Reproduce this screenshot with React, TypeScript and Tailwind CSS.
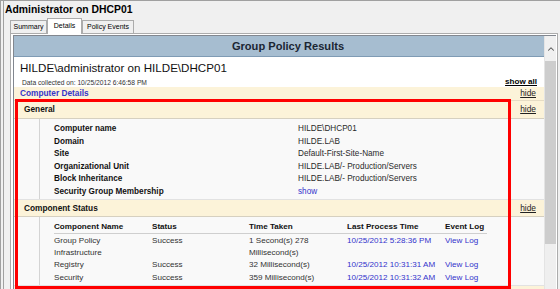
import { ChevronUp } from "lucide-react";

const general = [
	{ label: "Computer name", value: "HILDE\\DHCP01" },
	{ label: "Domain", value: "HILDE.LAB" },
	{ label: "Site", value: "Default-First-Site-Name" },
	{ label: "Organizational Unit", value: "HILDE.LAB/- Production/Servers" },
	{ label: "Block Inheritance", value: "HILDE.LAB/- Production/Servers" },
	{ label: "Security Group Membership", value: "show", link: true },
];

const components = [
	["Group Policy", "Success", "1 Second(s) 278", "10/25/2012 5:28:36 PM", "View Log"],
	["Infrastructure", "", "Millisecond(s)", "", ""],
	["Registry", "Success", "32 Millisecond(s)", "10/25/2012 10:31:31 AM", "View Log"],
	["Security", "Success", "359 Millisecond(s)", "10/25/2012 10:31:32 AM", "View Log"],
];

function SectionHeader({ title, className = "" }: { title: string; className?: string }) {
	return (
		<div
			className={`flex h-[18px] items-center justify-between border-b border-[#d6d0c0] bg-[#fcf3d9] pl-[10px] pr-[8px] ${className}`}
		>
			<span className="text-[8.3px] font-bold text-[#111]">{title}</span>
			<span className="text-[8.4px] text-[#222] underline">hide</span>
		</div>
	);
}

function App() {
	return (
		<div className="relative h-[289px] w-[560px] overflow-hidden border-l border-t border-[#a0a0a0] bg-[#f0f0f0] font-['Liberation_Sans',Arial,sans-serif] text-black">
			<div className="ml-[2px] flex h-full flex-col border-l border-[#a0a0a0]">
				<div className="h-[18px] pl-px text-[10.4px] font-bold leading-[18px]">
					Administrator on DHCP01
				</div>

				{/* tabs */}
				<div className="relative z-10 ml-[6px] flex h-[14px] items-end text-[7px] leading-[12px]">
					<div className="h-[13px] w-[37px] border border-b-0 border-[#acacac] bg-[#f0f0f0] text-center">
						Summary
					</div>
					<div className="-mb-px h-[16px] w-[35px] border border-b-0 border-[#acacac] bg-white pt-[1px] text-center">
						Details
					</div>
					<div className="h-[13px] w-[52px] border border-b-0 border-[#acacac] bg-[#f0f0f0] text-center">
						Policy Events
					</div>
				</div>

				<div className="ml-[6px] mr-[2px] flex-1 border border-b-0 border-[#acacac] bg-white pr-px pl-[2px] pt-px">
					<div className="flex h-full border-l border-t border-[#82878f]">
						<div className="w-[530px]">
							<div className="h-[21px] border-b border-[#7f9bb4] bg-[#a6bdd0] pl-[18px] text-center text-[11.1px] font-bold leading-[20px] text-[#1b2633]">
								Group Policy Results
							</div>
							<div className="h-[21px] pl-[6px] text-[11.6px] leading-[22px] text-[#111]">
								HILDE\administrator on HILDE\DHCP01
							</div>
							<div className="flex h-[9px] items-center justify-between pl-[8px] pr-[7px]">
								<span className="text-[6.7px] leading-[9px] text-[#333]">
									Data collected on: 10/25/2012 6:46:58 PM
								</span>
								<span className="-mt-[2px] text-[8.1px] font-bold leading-[9px] underline">
									show all
								</span>
							</div>
							<div className="flex h-[14px] items-center justify-between border-b border-[#e6dcc4] bg-[#fcf3d9] pl-[6px] pr-[8px]">
								<span className="text-[8.3px] font-bold text-[#3535c8]">Computer Details</span>
								<span className="text-[8.4px] text-[#222] underline">hide</span>
							</div>

							<SectionHeader title="General" />
							<div className="flex h-[80px] bg-[#f9f9f9]">
								<div className="w-[26px] border-r border-[#d4d4d4]" />
								<div className="pl-[14px] pt-[4px] text-[8.2px] leading-[12.5px]">
									{general.map((row) => (
										<div key={row.label} className="grid grid-cols-[244px_1fr]">
											<span className="font-bold text-[#111]">{row.label}</span>
											<span className={row.link ? "text-[#3333cc]" : "text-[#2a2a2a]"}>
												{row.value}
											</span>
										</div>
									))}
								</div>
							</div>

							<SectionHeader title="Component Status" className="border-t border-t-[#e2e2e2]" />
							<div className="flex h-[68px] bg-[#f9f9f9]">
								<div className="w-[26px] border-r border-[#d4d4d4]" />
								<div className="pl-[14px] pt-[4px] text-[8.1px] leading-[12.2px]">
									<div className="grid h-[13px] grid-cols-[98px_97px_98px_98px_42px] border-b border-[#cfcfcf] font-bold text-[#111]">
										<span>Component Name</span>
										<span>Status</span>
										<span>Time Taken</span>
										<span>Last Process Time</span>
										<span>Event Log</span>
									</div>
									<div className="pt-px">
										{components.map((row) => (
											<div key={row[0]} className="grid grid-cols-[98px_97px_98px_98px_42px] text-[#333]">
												<span>{row[0]}</span>
												<span>{row[1]}</span>
												<span>{row[2]}</span>
												<span className="text-[#3333cc]">{row[3]}</span>
												<span className="text-[#3333cc]">{row[4]}</span>
											</div>
										))}
									</div>
								</div>
							</div>
							<div className="h-[20px] border-t border-[#e2e2e2] bg-[#fcf3d9]" />
						</div>

						{/* scrollbar */}
						<div className="flex w-[12px] flex-col border-l border-[#e4e4e4] bg-[#f0f0f0]">
							<div className="flex h-[25px] items-center justify-center">
								<ChevronUp size={10} strokeWidth={2.5} color="#555" />
							</div>
							<div className="h-[183px] bg-[#cdcdcd]" />
							<div className="flex-1 bg-[#efefef]" />
						</div>
					</div>
				</div>
			</div>

			{/* red highlight box */}
			<div className="absolute left-[14px] top-[98px] h-[190px] w-[496px] border-[3px] border-[#ff0000]" />
		</div>
	);
}

export default App;
